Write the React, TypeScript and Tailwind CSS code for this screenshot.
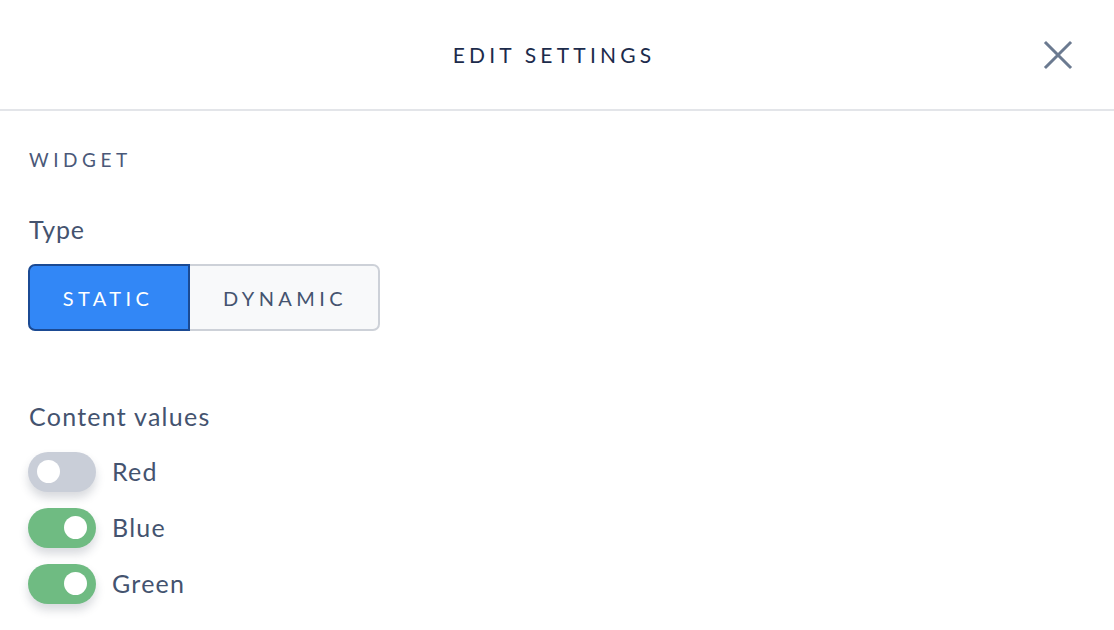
import { useState } from "react";

type Item = { label: string; on: boolean };

const Toggle: React.FC<{ on: boolean; onClick: () => void }> = ({ on, onClick }) => (
  <button
    type="button"
    onClick={onClick}
    className={`flex h-[40px] w-[68px] items-center rounded-full px-[9px] shadow-[0_6px_10px_rgba(40,50,70,0.18)] ${
      on ? "justify-end bg-[#6fbb82]" : "justify-start bg-[#c9ced8]"
    }`}
  >
    <span className="h-[23px] w-[23px] rounded-full bg-white" />
  </button>
);

export default function App() {
  const [type, setType] = useState<"static" | "dynamic">("static");
  const [items, setItems] = useState<Item[]>([
    { label: "Red", on: false },
    { label: "Blue", on: true },
    { label: "Green", on: true },
  ]);

  function toggle(i: number) {
    setItems(items.map((it, idx) => (idx === i ? { ...it, on: !it.on } : it)));
  }

  return (
    <div className="min-h-screen w-full bg-white font-['Lato',sans-serif] text-[#44536f]">
      <div className="relative flex h-[111px] items-center justify-center border-b-2 border-[#e3e5e9]">
        <h1 className="pr-[6px] text-[21px] tracking-[0.2em] text-[#1c2b4b]">EDIT SETTINGS</h1>
        <button type="button" className="absolute right-[40px] top-[39px] text-[#6b7a90]">
          <svg width="32" height="32" viewBox="0 0 32 32" fill="none">
            <path d="M4 4L28 28M28 4L4 28" stroke="currentColor" strokeWidth="3" strokeLinecap="square" />
          </svg>
        </button>
      </div>

      <div className="px-[28px] pt-[35px]">
        <div className="pl-[1px] text-[19px] tracking-[0.24em] text-[#4a5878]">WIDGET</div>

        <div className="mt-[36px] pl-[1px] text-[25px] tracking-[0.03em]">Type</div>
        <div className="mt-[16px] flex w-fit">
          <button
            type="button"
            onClick={() => setType("static")}
            className={`h-[67px] w-[162px] rounded-l-[7px] border-2 pr-[2px] text-[20px] tracking-[0.22em] ${
              type === "static"
                ? "border-[#1b4a93] bg-[#3287f6] text-white"
                : "border-[#cdd1d8] border-r-0 bg-[#f8f9fa] text-[#44536f]"
            }`}
          >
            STATIC
          </button>
          <button
            type="button"
            onClick={() => setType("dynamic")}
            className={`h-[67px] w-[190px] rounded-r-[7px] border-2 pl-[2px] text-[20px] tracking-[0.22em] ${
              type === "dynamic"
                ? "border-[#1b4a93] bg-[#3287f6] text-white"
                : "border-l-0 border-[#cdd1d8] bg-[#f8f9fa] text-[#44536f]"
            }`}
          >
            DYNAMIC
          </button>
        </div>

        <div className="mt-[67px] pl-[1px] text-[25px] tracking-[0.05em]">Content values</div>
        <div className="mt-[16px] flex flex-col gap-[16px]">
          {items.map((it, i) => (
            <div key={it.label} className="flex items-center gap-[16px]">
              <Toggle on={it.on} onClick={() => toggle(i)} />
              <span className="text-[25px] tracking-[0.05em]">{it.label}</span>
            </div>
          ))}
        </div>
      </div>
    </div>
  );
}
